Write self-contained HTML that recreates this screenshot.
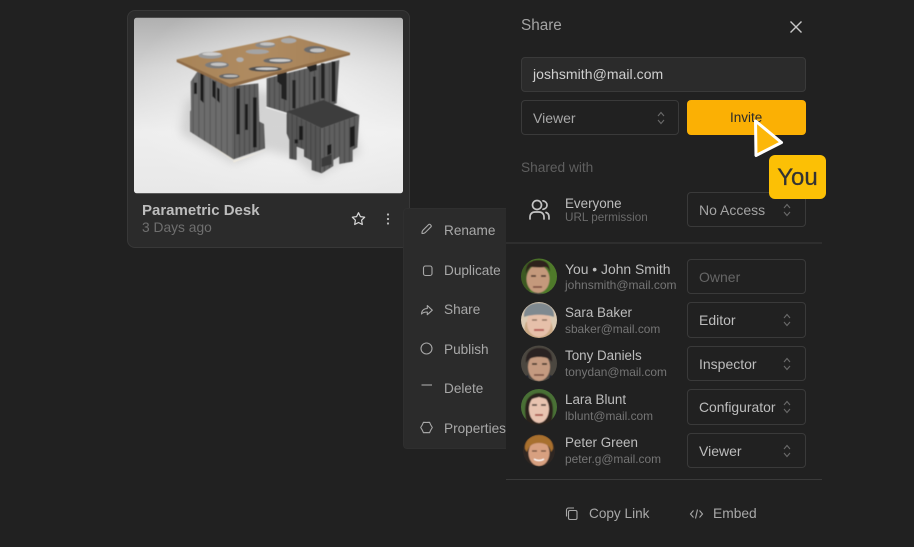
<!DOCTYPE html>
<html><head><meta charset="utf-8">
<style>
*{box-sizing:border-box;margin:0;padding:0}
html,body{width:914px;height:547px;background:#212121;overflow:hidden;font-family:"Liberation Sans",sans-serif}
#w{position:absolute;left:0;top:0;width:914px;height:547px;filter:blur(.3px)}
.t{position:absolute;white-space:nowrap;line-height:16px}
.b{position:absolute;border:1px solid #3a3a3a;border-radius:4px}
.n{font-size:13.400px;color:#bdbdbd}
.s{font-size:11.900px;color:#757575}
.m{font-size:13.600px;color:#a8a8a8}
svg{position:absolute;overflow:visible}
</style></head><body><div id="w">

<!-- card -->
<div class="b" style="left:127px;top:10px;width:283px;height:238px;background:#2b2b2b;border-radius:8px;border-color:#383838"></div>
<svg style="left:0;top:0" width="914" height="547">
<defs>
<linearGradient id="bg" x1="0" y1="0" x2="0" y2="1"><stop offset="0" stop-color="#b0b0b0"/><stop offset=".3" stop-color="#d4d4d4"/><stop offset=".65" stop-color="#eeeeee"/><stop offset="1" stop-color="#e8e8e8"/></linearGradient>
<radialGradient id="bg2" cx="60%" cy="45%" r="62%"><stop offset="0" stop-color="#f6f6f6" stop-opacity=".9"/><stop offset="1" stop-color="#f6f6f6" stop-opacity="0"/></radialGradient>
<linearGradient id="wood" x1="0" y1="0" x2="1" y2="0"><stop offset="0" stop-color="#a88458"/><stop offset=".5" stop-color="#b08c62"/><stop offset="1" stop-color="#a27e54"/></linearGradient>
<filter id="sb"><feGaussianBlur stdDeviation="14"/></filter>
<filter id="s1" x="-5%" y="-5%" width="110%" height="110%"><feGaussianBlur stdDeviation="1.600"/></filter>
<filter id="s2"><feGaussianBlur stdDeviation=".5"/></filter>
<pattern id="st" width="17" height="20" patternUnits="userSpaceOnUse"><rect width="17" height="20" fill="#6c6c6c"/><rect x="14" width="3" height="20" fill="#555"/></pattern>
<pattern id="st2" width="15" height="20" patternUnits="userSpaceOnUse"><rect width="15" height="20" fill="#5e5e5e"/><rect x="12" width="3" height="20" fill="#4a4a4a"/></pattern>
<pattern id="st3" width="14" height="20" patternUnits="userSpaceOnUse"><rect width="14" height="20" fill="#555"/><rect x="11" width="3" height="20" fill="#444"/></pattern>
<clipPath id="imgc"><rect x="42" y="53" width="807" height="527" rx="8"/></clipPath>
<clipPath id="a1"><circle cx="539" cy="276.500" r="18"/></clipPath>
<clipPath id="a2"><circle cx="539" cy="320" r="18"/></clipPath>
<clipPath id="a3"><circle cx="539" cy="363.500" r="18"/></clipPath>
<clipPath id="a4"><circle cx="539" cy="407" r="18"/></clipPath>
<clipPath id="a5"><circle cx="539" cy="450.500" r="16"/></clipPath>
</defs>
<g transform="translate(120 0) scale(.33333)">
<g clip-path="url(#imgc)">
<rect x="42" y="53" width="807" height="527" fill="url(#bg)"/>
<rect x="42" y="53" width="807" height="527" fill="url(#bg2)"/>
<path d="M180 400L340 490L440 450L520 470L590 530L720 460L700 380L640 300L330 260L200 300Z" fill="#9a9a9a" opacity=".35" filter="url(#sb)"/>
</g>
<g filter="url(#s1)">
<!-- left pedestal -->
<path d="M208 392L340 472V488L445 448L340 482Z" fill="#efeadf"/>
<path d="M212 245L232 215L340 258V478L210 395V335L213 330Z" fill="url(#st)"/>
<path d="M340 258L415 250L418 365L432 372L435 445L340 478Z" fill="url(#st2)"/>
<path d="M222 248h9v34h-9zM241 218l10 5v86l-10-9zM277 240l10 6v52l-10-9zM291 262l8 5v42l-8-8zM349 265h11v138h-11zM375 312h9v78h-9zM399 292h11v150h-11z" fill="#1f1f1f"/>
<!-- right pedestal -->
<path d="M440 235L658 180L650 310L520 345L440 320Z" fill="url(#st2)"/>
<path d="M472 222l28-6v85l-16-6v-40l-12-10zM517 240h10v85h-10zM560 200l30-8v18l-20 6zM603 190h11v105h-11zM635 185h11v120h-11zM579 230h8v70h-8z" fill="#202020"/>
<path d="M438 322L520 346" stroke="#f2f2f2" stroke-width="3" fill="none"/>
<!-- stool -->
<path d="M500 335L605 385V520L575 510V482L552 470V448L530 440V480L508 476V420L500 400Z" fill="url(#st3)"/>
<path d="M605 385L718 345L712 442L698 450V485L658 492V470L640 480V498L605 520Z" fill="url(#st2)"/>
<path d="M500 335L610 300L718 345L605 385Z" fill="#3d3d3d"/>
<path d="M537 378h12v42h-12zM690 382l14-5v60l-14 6zM622 436l12-4v28l-12 6zM524 418h10v12h-10z" fill="#1d1d1d"/>
<path d="M605 475l30-12v30l-30 8z" fill="#3a3a3a"/>
<!-- table top -->
<path d="M170 178L510 107L690 158L330 262Z" fill="url(#wood)"/>
<path d="M170 178L330 252L690 158L690 165L330 262L170 186Z" fill="#8f6c46"/>
<g>
<ellipse cx="271" cy="166" rx="36" ry="10" fill="#9a9a9a"/><ellipse cx="275" cy="162" rx="28" ry="5" fill="#cfcfcf"/>
<ellipse cx="436" cy="135" rx="30" ry="9" fill="#8a8a8a"/><ellipse cx="442" cy="132" rx="22" ry="5" fill="#c4c4c4"/>
<ellipse cx="506" cy="122" rx="23" ry="8" fill="#aaa"/>
<ellipse cx="412" cy="155" rx="35" ry="7" fill="#a4a4a4"/>
<ellipse cx="585" cy="149" rx="33" ry="11" fill="#6c6c6c"/><ellipse cx="592" cy="151" rx="22" ry="6" fill="#c2c2c2"/>
<ellipse cx="360" cy="179" rx="11" ry="7" fill="#b0b0b0"/>
<ellipse cx="474" cy="182" rx="44" ry="9" fill="#6a6a6a"/><ellipse cx="480" cy="181" rx="32" ry="4.500" fill="#cdcdcd"/>
<ellipse cx="291" cy="195" rx="36" ry="10" fill="#7c7c7c"/><ellipse cx="296" cy="193" rx="24" ry="5" fill="#c4c4c4"/>
<ellipse cx="436" cy="207" rx="50" ry="8" fill="#4e4e4e"/><ellipse cx="440" cy="206" rx="34" ry="4" fill="#cdcdcd"/>
<ellipse cx="328" cy="229" rx="31" ry="8" fill="#666"/><ellipse cx="332" cy="228" rx="22" ry="3.500" fill="#bebebe"/>
</g>
</g>
</g>

<!-- star, dots -->
<path d="M358.500 212.700l1.900 3.900 4.300.6-3.100 3 .7 4.300-3.800-2-3.800 2 .7-4.300-3.100-3 4.300-.6z" fill="none" stroke="#d8d8d8" stroke-width="1.200" stroke-linejoin="round"/>
<g fill="#bdbdbd"><circle cx="388" cy="214.500" r="1.100"/><circle cx="388" cy="219" r="1.100"/><circle cx="388" cy="223.500" r="1.100"/></g>
</svg>
<div class="t" style="left:142px;top:203px;font-size:15px;font-weight:bold;color:#bdbdbd">Parametric Desk</div>
<div class="t" style="left:142px;top:220px;font-size:13.800px;color:#6f6f6f">3 Days ago</div>

<!-- menu -->
<div class="b" style="left:403px;top:208px;width:120px;height:241px;background:#2b2b2b;border-color:#2f2f2f"></div>
<div class="t m" style="left:444px;top:223px">Rename</div>
<div class="t m" style="left:444px;top:263px">Duplicate</div>
<div class="t m" style="left:444px;top:302px">Share</div>
<div class="t m" style="left:444px;top:342px">Publish</div>
<div class="t m" style="left:444px;top:381px">Delete</div>
<div class="t m" style="left:444px;top:421px">Properties</div>

<!-- panel -->
<div style="position:absolute;left:506px;top:0;width:408px;height:547px;background:#212121"></div>
<svg style="left:0;top:0" width="914" height="547" fill="none" stroke="#a8a8a8" stroke-width="1.100">
<path d="M422 232.500c.2-1 .4-1.700 1-2.300l5.700-5.700c1-1 3.300 1.300 2.300 2.300l-5.700 5.700c-.6.600-2.300 1-3.300 1z" stroke-linejoin="round"/>
<rect x="423.500" y="266" width="8.500" height="9.500" rx="2"/>
<path d="M421.500 314c.2-3.700 2.500-5.300 5.800-5.500v-3l5 4.700-5 4.500v-2.700c-2.500 0-4.300.3-5.800 2z" stroke-linejoin="round"/>
<circle cx="426.500" cy="348.500" r="5.500"/>
<path d="M421.500 385h10.500"/>
<path d="M432.300 427.500L430.800 430L429.500 432.700L426.500 432.600L423.500 432.700L422.200 430L420.700 427.500L422.200 425L423.500 422.300L426.500 422.400L429.500 422.300L430.800 425Z" stroke-linejoin="round"/>
<!-- close -->
<path d="M790.500 21.500l11 11M801.500 21.500l-11 11" stroke="#c8c8c8" stroke-width="1.400"/>
<!-- dividers -->
<path d="M506 243h316M506 479.500h316" stroke="#3a3a3a" stroke-width="1"/>
</svg>

<div class="t" style="left:521px;top:18px;font-size:15.300px;color:#a3a3a3">Share</div>
<div class="b" style="left:521px;top:57px;width:285px;height:35px;background:#2b2b2b"></div>
<div class="t" style="left:533px;top:66px;font-size:14px;color:#d0d0d0;letter-spacing:.05px">joshsmith@mail.com</div>
<div class="b" style="left:521px;top:100px;width:158px;height:35px"></div>
<div class="t" style="left:533px;top:110px;font-size:14px;color:#a8a8a8">Viewer</div>
<div style="position:absolute;left:687px;top:100px;width:119px;height:35px;background:#fbb004;border-radius:4px"></div>
<div class="t" style="left:730px;top:110px;font-size:13.500px;color:#2a2a2a">Invite</div>
<div class="t" style="left:521px;top:160px;font-size:13.700px;color:#5f5f5f">Shared with</div>

<div class="t n" style="left:565px;top:196px">Everyone</div>
<div class="t s" style="left:565px;top:210px;font-size:11.700px;color:#6b6b6b">URL permission</div>
<div class="b" style="left:687px;top:192px;width:119px;height:35px"></div>
<div class="t" style="left:699px;top:202px;font-size:14px;color:#a3a3a3">No Access</div>

<div class="t n" style="left:565px;top:261px;font-size:13.900px">You • John Smith</div>
<div class="t s" style="left:565px;top:277px;font-size:12px">johnsmith@mail.com</div>
<div class="b" style="left:687px;top:259px;width:119px;height:35px"></div>
<div class="t" style="left:699px;top:269px;font-size:14px;color:#666">Owner</div>

<div class="t n" style="left:565px;top:305px">Sara Baker</div>
<div class="t s" style="left:565px;top:321px">sbaker@mail.com</div>
<div class="b" style="left:687px;top:302px;width:119px;height:36px"></div>
<div class="t" style="left:699px;top:312px;font-size:14px;color:#bdbdbd">Editor</div>

<div class="t n" style="left:565px;top:348px">Tony Daniels</div>
<div class="t s" style="left:565px;top:364px">tonydan@mail.com</div>
<div class="b" style="left:687px;top:346px;width:119px;height:35px"></div>
<div class="t" style="left:699px;top:356px;font-size:14px;color:#bdbdbd">Inspector</div>

<div class="t n" style="left:565px;top:392px">Lara Blunt</div>
<div class="t s" style="left:565px;top:408px">lblunt@mail.com</div>
<div class="b" style="left:687px;top:389px;width:119px;height:36px"></div>
<div class="t" style="left:699px;top:399px;font-size:13.900px;color:#bdbdbd">Configurator</div>

<div class="t n" style="left:565px;top:435px">Peter Green</div>
<div class="t s" style="left:565px;top:451px">peter.g@mail.com</div>
<div class="b" style="left:687px;top:433px;width:119px;height:35px"></div>
<div class="t" style="left:699px;top:443px;font-size:14px;color:#bdbdbd">Viewer</div>

<div class="t" style="left:589px;top:506px;font-size:13.600px;color:#a8a8a8">Copy Link</div>
<div class="t" style="left:713px;top:506px;font-size:13.800px;color:#a8a8a8">Embed</div>

<svg style="left:0;top:0" width="914" height="547">
<!-- chevrons -->
<g fill="none" stroke="#6a6a6a" stroke-width="1.100">
<path d="M658 116l3-3.500 3 3.500M658 120l3 3.500 3-3.500"/>
<path d="M784 208l3-3.500 3 3.500M784 212l3 3.500 3-3.500"/>
<path d="M784 318l3-3.500 3 3.500M784 322l3 3.500 3-3.500"/>
<path d="M784 362l3-3.500 3 3.500M784 366l3 3.500 3-3.500"/>
<path d="M784 405l3-3.500 3 3.500M784 409l3 3.500 3-3.500"/>
<path d="M784 449l3-3.500 3 3.500M784 453l3 3.500 3-3.500"/>
</g>
<!-- everyone icon -->
<g fill="none" stroke="#c4c4c4" stroke-width="1.700" stroke-linecap="round">
<circle cx="537" cy="205" r="4.500"/>
<path d="M530 219v-2c0-3 2-5 5-5h4c3 0 5 2 5 5v2"/>
<path d="M543 200.800c2.500.5 4 2.300 4 4.300s-1.500 3.700-4 4.200M546 212.500c2 .6 3 2.300 3 4.500v2"/>
</g>
<!-- copy & embed -->
<g fill="none" stroke="#a8a8a8" stroke-width="1.100">
<rect x="568.500" y="510.500" width="8.500" height="9" rx="1.500"/>
<path d="M566.500 516.500v-6.500a2 2 0 0 1 2-2h5.500"/>
<path d="M693.500 510.500l-3 3.500 3 3.500M699.500 510.500l3 3.500-3 3.500M697.500 509.500l-2 9"/>
</g>

<!-- avatars -->
<g clip-path="url(#a1)" filter="url(#s2)">
<rect x="520" y="258" width="38" height="38" fill="#4f7a2c"/><rect x="520" y="258" width="10" height="38" fill="#3c5a24"/>
<ellipse cx="538" cy="279" rx="11.500" ry="14" fill="#c4997c"/>
<path d="M526 274c-1-10 5-14 12-14s12 3 12 12c-2-4-3-5-5-5-5 1-11 0-14 0-2 1-4 3-5 7z" fill="#2e241e"/>
<path d="M531 276h5M541 276h5" stroke="#3a2a22" stroke-width="1.500"/><path d="M533 287h9" stroke="#6e4034" stroke-width="1.400"/>
<path d="M522 297c3-4 8-5 16-4s12 1 16 4z" fill="#3d3d3d"/>
</g>
<g clip-path="url(#a2)" filter="url(#s2)">
<rect x="520" y="301" width="38" height="38" fill="#dccbb4"/>
<path d="M526 322c-3 8-1 14 2 18h22c3-4 4-10 1-18z" fill="#c9a884"/>
<ellipse cx="539" cy="323" rx="12" ry="14" fill="#e6c0aa"/>
<path d="M524 317c-1-9 6-14 15-14s16 5 15 14c-8-3-22-3-30 0z" fill="#7f8990"/>
<path d="M532 320h5M542 320h5" stroke="#7a5c4c" stroke-width="1.300"/><path d="M534 330h10" stroke="#b75d58" stroke-width="2"/>
</g>
<g clip-path="url(#a3)" filter="url(#s2)">
<rect x="520" y="345" width="38" height="38" fill="#4b4640"/>
<ellipse cx="539" cy="367" rx="11" ry="14" fill="#c49a80"/>
<path d="M526 363c-1-10 5-15 13-15s14 4 13 14c-3-4-7-5-13-5s-10 1-13 6z" fill="#2a2420"/>
<path d="M532 364h5M542 364h5" stroke="#33261f" stroke-width="1.500"/><path d="M534 375h10" stroke="#6e4438" stroke-width="1.400"/>
<path d="M521 383c0-5 4-7 7-8l2 8zM557 383c0-5-4-7-7-8l-2 8z" fill="#1c2430"/>
</g>
<g clip-path="url(#a4)" filter="url(#s2)">
<rect x="520" y="388" width="38" height="38" fill="#496f36"/>
<path d="M527 426c-2-12-3-19 0-26 3-5 8-7 12-7s9 2 12 7c3 7 2 14 0 26z" fill="#2c211c"/>
<ellipse cx="539" cy="409" rx="10" ry="14" fill="#e8c3b0"/>
<path d="M530 400c3-4 6-6 9-6s6 2 9 6c-4-2-6-2-9-3-3 1-5 1-9 3z" fill="#2c211c"/>
<path d="M532 405h5M541 405h5" stroke="#41302a" stroke-width="1.400"/><path d="M535 415h8" stroke="#a8584f" stroke-width="1.800"/>
</g>
<g clip-path="url(#a5)" filter="url(#s2)">
<rect x="520" y="432" width="38" height="38" fill="#2e2620"/>
<ellipse cx="539" cy="453" rx="10.500" ry="13" fill="#d8a080"/>
<path d="M525 449c-1-8 6-14 14-14s15 6 14 14l-2 3c-1-6-5-9-12-9s-10 3-12 9z" fill="#a8702f"/>
<path d="M532 451h5M541 451h5" stroke="#5e3f2e" stroke-width="1.300"/><path d="M534 459c3 2 7 2 10 0" stroke="#fff" stroke-width="1.300" fill="none"/>
</g>

<!-- cursor -->
<path d="M755.500 121L781.500 142.500L756 155.500Z" fill="#fcb70a" stroke="#fff" stroke-width="3" stroke-linejoin="round"/>
</svg>

<div style="position:absolute;left:769px;top:155px;width:57px;height:44px;background:#fcc005;border-radius:6px;color:#333;font-size:24px;line-height:45px;text-align:center;-webkit-text-stroke:.25px #333">You</div>

</div></body></html>
